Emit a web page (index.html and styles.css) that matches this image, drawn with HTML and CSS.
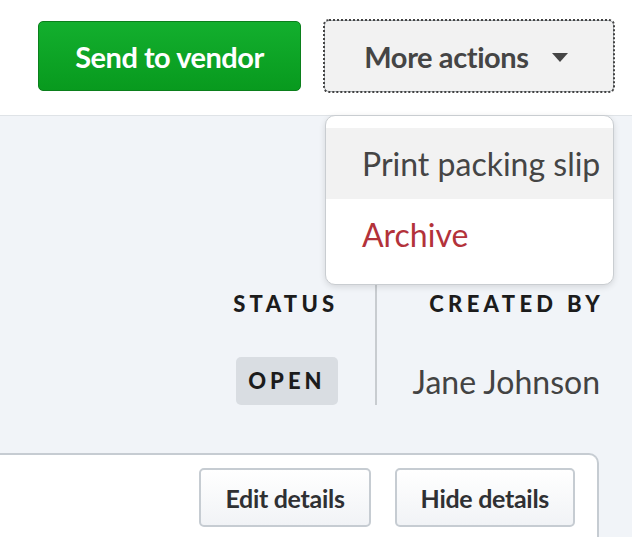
FILE: index.html
```html
<!DOCTYPE html>
<html>
<head>
<meta charset="utf-8">
<link rel="stylesheet" href="styles.css">
</head>
<body>
<div class="page">
  <header class="topbar">
    <button class="btn-primary">Send to vendor</button>
    <div class="menu-wrap">
      <button class="btn-more">More actions <span class="caret"></span></button>
      <div class="menu">
        <div class="menu-item active">Print packing slip</div>
        <div class="menu-item danger">Archive</div>
      </div>
    </div>
  </header>
  <main class="content">
    <div class="summary">
      <div class="field field-status">
        <div class="label">STATUS</div>
        <div class="value"><span class="badge">OPEN</span></div>
      </div>
      <div class="divider"></div>
      <div class="field field-created">
        <div class="label">CREATED BY</div>
        <div class="value name">Jane Johnson</div>
      </div>
    </div>
    <section class="card">
      <div class="card-actions">
        <button class="btn-secondary">Edit details</button>
        <button class="btn-secondary">Hide details</button>
      </div>
    </section>
  </main>
</div>
</body>
</html>
```
FILE: styles.css
```css
* { box-sizing: border-box; }
html, body { margin: 0; padding: 0; }
body {
  width: 632px;
  height: 537px;
  overflow: hidden;
  font-family: Lato, "Open Sans", sans-serif;
  background: #f1f4f8;
}
.page { width: 632px; height: 537px; overflow: hidden; }
.topbar {
  height: 116px;
  background: #ffffff;
  border-bottom: 1px solid #dfe3e7;
  display: flex;
  justify-content: flex-end;
  align-items: flex-start;
  padding: 20px 18px 0 0;
  gap: 23px;
}
.btn-primary {
  margin-top: 1px;
  width: 263px;
  height: 70px;
  border: 1px solid #0b7f1c;
  border-radius: 5px;
  background: linear-gradient(#13af2e, #089a1e);
  color: #ffffff;
  font-family: Lato, sans-serif;
  font-weight: 700;
  font-size: 29px;
  letter-spacing: -0.5px;
  padding: 0;
}
.menu-wrap { position: relative; }
.btn-more {
  width: 290px;
  height: 72px;
  border: 1px solid #a7adb2;
  border-radius: 5px;
  outline: 2px dotted #444;
  outline-offset: -1px;
  background: #f2f2f2;
  color: #454545;
  font-family: Lato, sans-serif;
  font-weight: 700;
  font-size: 29px;
  letter-spacing: -0.4px;
  padding: 0 6px 0 0;
  display: flex;
  align-items: center;
  justify-content: center;
}
.caret {
  display: inline-block;
  width: 0; height: 0;
  margin-left: 23px;
  margin-top: 2px;
  border-left: 8px solid transparent;
  border-right: 8px solid transparent;
  border-top: 9px solid #454545;
}
.menu {
  position: absolute;
  top: 95px;
  left: 1px;
  width: 289px;
  height: 170px;
  background: #ffffff;
  border: 1px solid #c9cdd1;
  border-radius: 10px;
  box-shadow: 0 2px 6px rgba(0,0,0,0.12);
  padding-top: 12px;
  z-index: 10;
}
.menu-item {
  height: 71px;
  line-height: 71px;
  padding-left: 36px;
  font-size: 32px;
  color: #454545;
  white-space: nowrap;
}
.menu-item.active { background: #f2f2f2; }
.menu-item.danger { color: #b3323a; }
.content { padding-top: 169px; }
.summary {
  display: flex;
  justify-content: flex-end;
  padding-right: 32px;
  height: 120px;
}
.field { display: flex; flex-direction: column; align-items: flex-end; }
.field-status { padding-right: 37px; }
.field-created { padding-left: 36px; }
.label {
  font-weight: 900;
  font-size: 22px;
  letter-spacing: 4.3px;
  margin-right: -4px;
  color: #1c1c1c;
  height: 38px;
  line-height: 38px;
}
.field-status .label { margin-right: -1px; }
.value { margin-top: 34px; height: 48px; display: flex; align-items: center; }
.badge {
  display: inline-block;
  background: #d9dde2;
  border-radius: 5px;
  padding: 0 12px 0 12px;
  height: 48px;
  line-height: 48px;
  font-weight: 900;
  font-size: 22px;
  letter-spacing: 4px;
  color: #1c1c1c;
}
.name { font-size: 32px; color: #434343; }
.divider { width: 2px; background: #c8ccd0; }
.card {
  margin-top: 48px;
  margin-left: -20px;
  width: 619px;
  height: 84px;
  background: #ffffff;
  border: 2px solid #c6ccd2;
  border-bottom: none;
  border-radius: 10px 10px 0 0;
}
.card-actions {
  display: flex;
  justify-content: flex-end;
  gap: 24px;
  padding: 13px 22px 0 0;
}
.btn-secondary {
  height: 59px;
  padding: 0 24px;
  background: linear-gradient(#ffffff, #f1f3f6);
  border: 2px solid #c6ccd2;
  border-radius: 5px;
  font-family: Lato, sans-serif;
  font-weight: 700;
  font-size: 25px;
  color: #2f3033;
  letter-spacing: -0.3px;
}
```
